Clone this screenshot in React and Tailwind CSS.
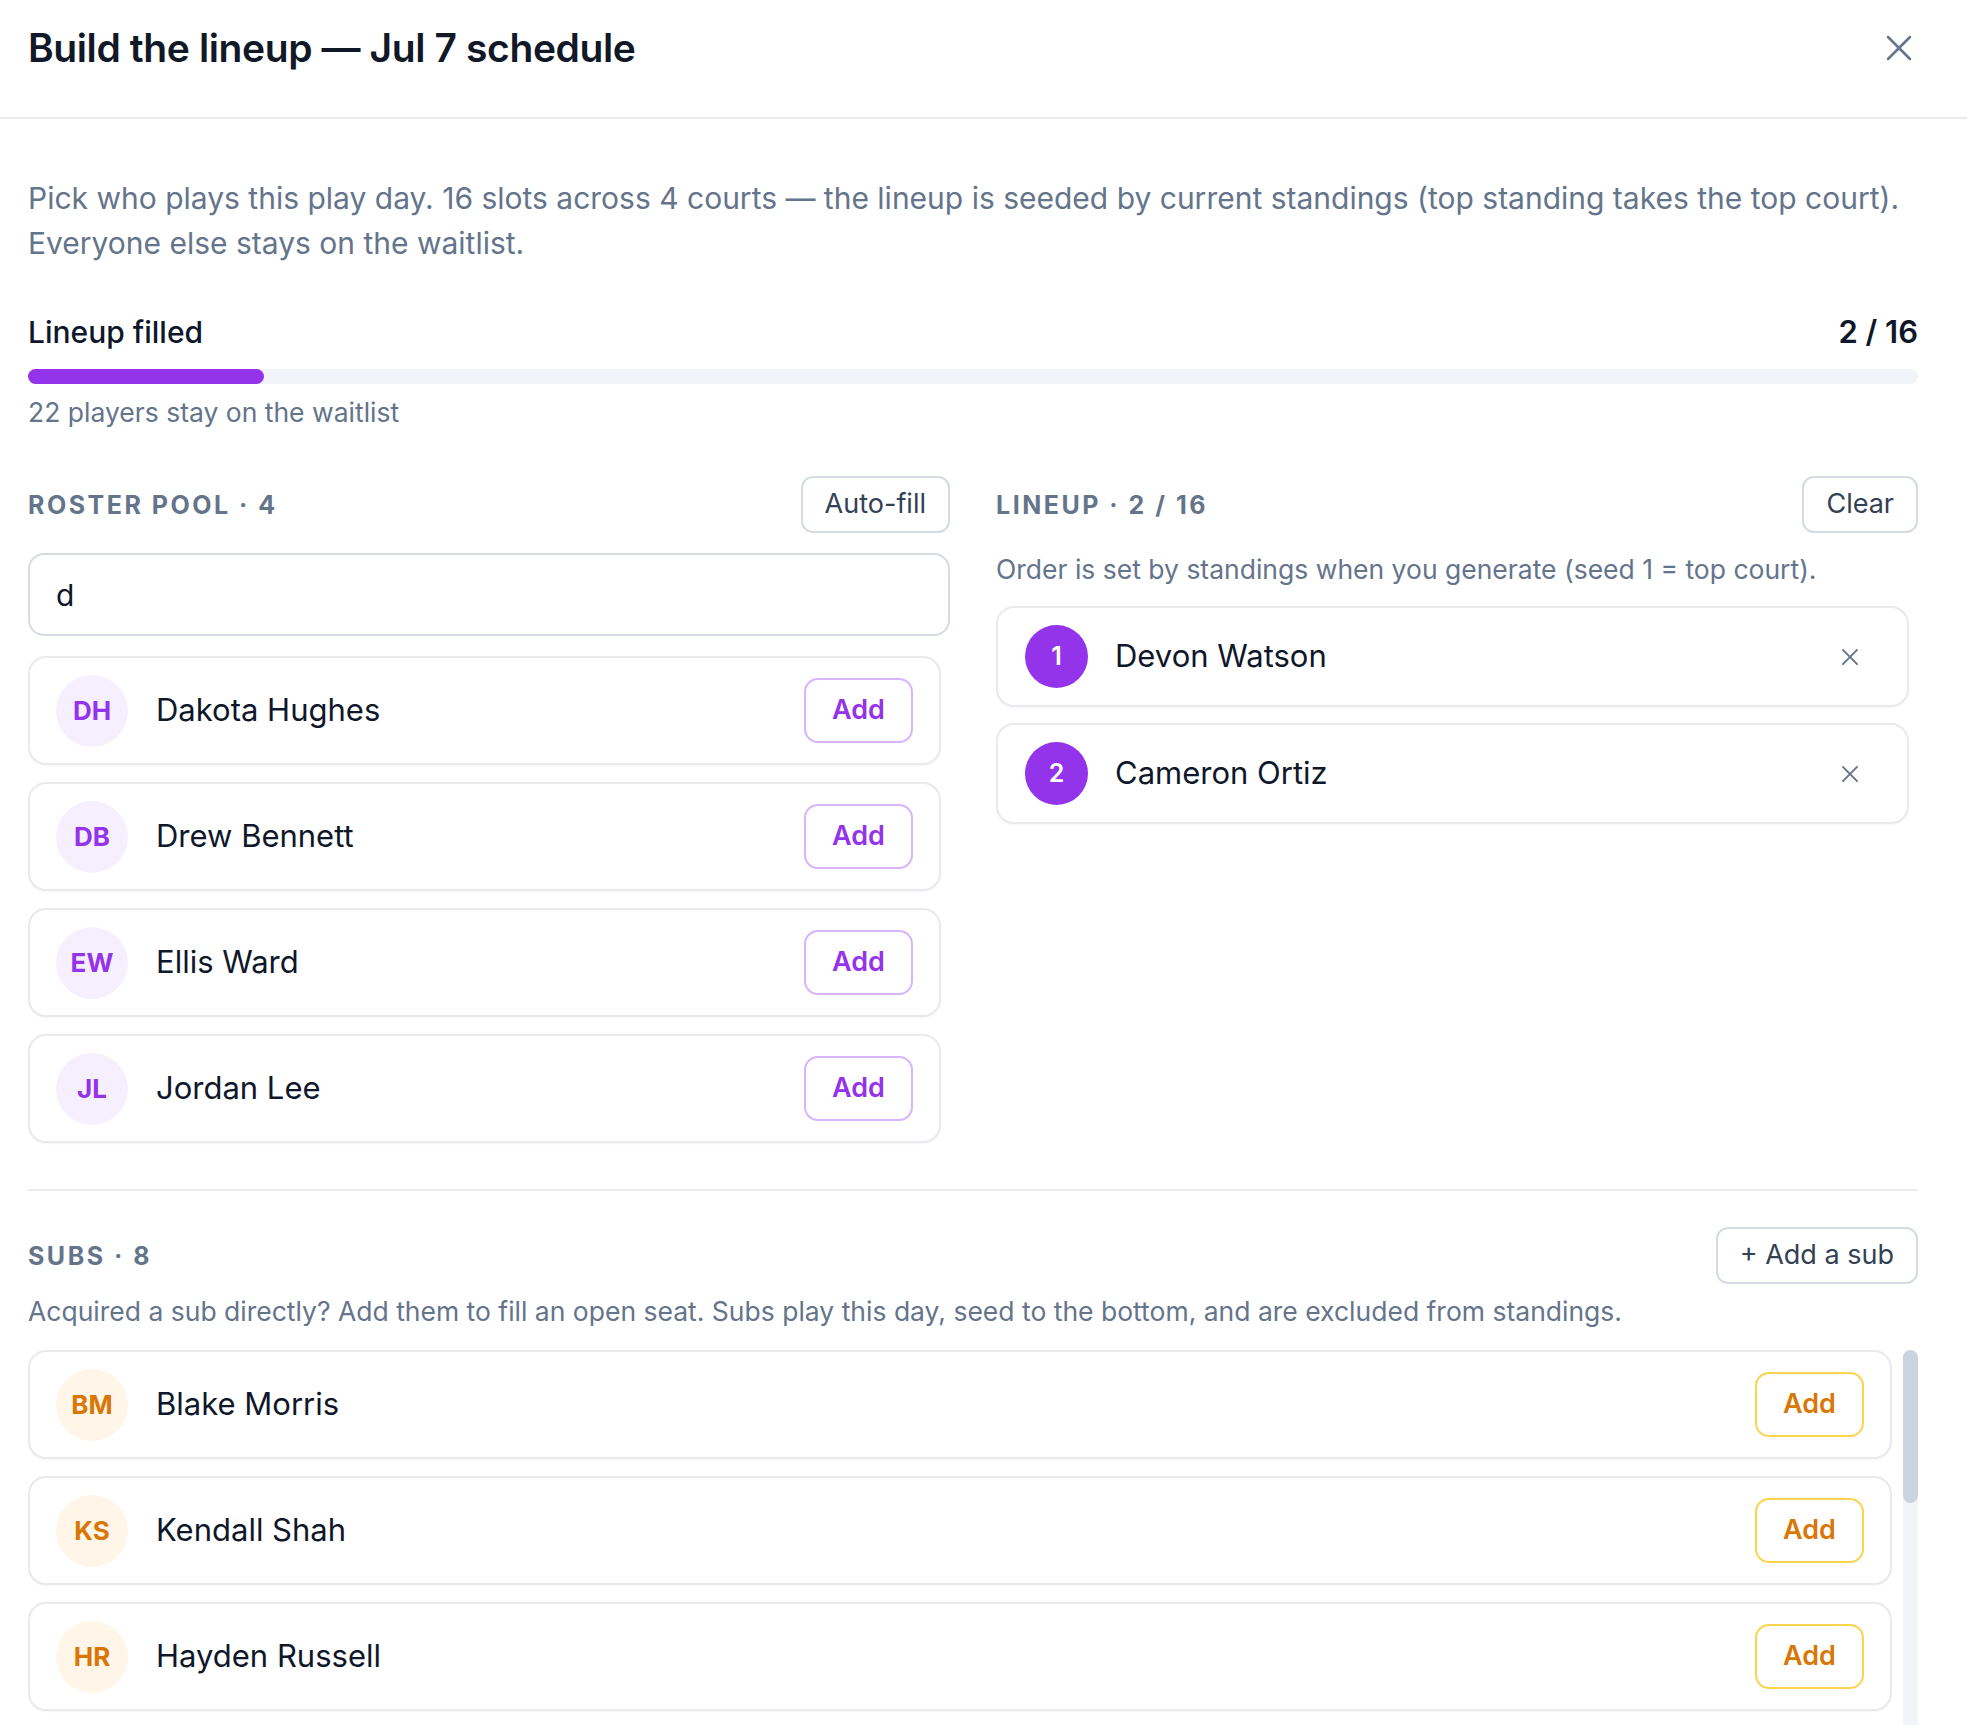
import React from "react";

const roster = [
  { initials: "DH", name: "Dakota Hughes" },
  { initials: "DB", name: "Drew Bennett" },
  { initials: "EW", name: "Ellis Ward" },
  { initials: "JL", name: "Jordan Lee" },
];

const lineup = [
  { seed: 1, name: "Devon Watson" },
  { seed: 2, name: "Cameron Ortiz" },
];

const subs = [
  { initials: "BM", name: "Blake Morris" },
  { initials: "KS", name: "Kendall Shah" },
  { initials: "HR", name: "Hayden Russell" },
  { initials: "QF", name: "Quinn Foster" },
  { initials: "RB", name: "Riley Brooks" },
  { initials: "SH", name: "Sawyer Hayes" },
  { initials: "PR", name: "Parker Reed" },
  { initials: "SG", name: "Skyler Grant" },
];

function CloseIcon({ size = 28, stroke = 2.5 }) {
  return (
    <svg width={size} height={size} viewBox="0 0 28 28" fill="none">
      <path
        d="M3 3 25 25M25 3 3 25"
        stroke="currentColor"
        strokeWidth={stroke}
        strokeLinecap="round"
      />
    </svg>
  );
}

function SectionLabel({ children }) {
  return (
    <h2 className="pt-[3px] text-[25px] font-bold tracking-[0.1em] text-[#64748b] uppercase">
      {children}
    </h2>
  );
}

function GhostButton({ children }) {
  return (
    <button className="h-[57px] px-[22px] border-2 border-[#d6dbe3] rounded-[12px] text-[27px] text-[#334155] bg-white">
      {children}
    </button>
  );
}

function PlayerCard({ initials, name, tone }) {
  const sub = tone === "sub";
  return (
    <div className="h-[109px] shrink-0 flex items-center px-[26px] border-2 border-[#e8eaee] rounded-[18px] bg-white shadow-[0_1px_2px_rgba(15,23,42,0.04)]">
      <div
        className={`w-[72px] h-[72px] rounded-full flex items-center justify-center text-[26px] font-bold ${
          sub ? "bg-[#fff5e8] text-[#d97706]" : "bg-[#f6effe] text-[#9333ea]"
        }`}
      >
        {initials}
      </div>
      <span className="ml-[28px] text-[31px] text-[#0f172a]">{name}</span>
      <button
        className={`ml-auto w-[109px] h-[65px] border-2 rounded-[14px] text-[27px] font-semibold bg-white ${
          sub ? "border-[#fcd34d] text-[#d97706]" : "border-[#d8b4fe] text-[#9333ea]"
        }`}
      >
        Add
      </button>
    </div>
  );
}

export default function App() {
  return (
    <div className="w-full h-screen overflow-hidden bg-white font-['Inter',sans-serif] text-[#0f172a]">
      {/* header */}
      <div className="h-[119px] border-b-2 border-[#e8eaee] flex items-start justify-between pl-[28px] pr-[54px] pt-[28px]">
        <h1 className="h-[40px] flex items-center text-[39px] font-semibold tracking-[-0.01em] text-[#111827]">
          Build the lineup — Jul 7 schedule
        </h1>
        <button className="h-[40px] flex items-center text-[#64748b]">
          <CloseIcon />
        </button>
      </div>

      <div className="pl-[28px] pr-[49px] pt-[57px]">
        <p className="text-[30px] leading-[45px] text-[#64748b]">
          Pick who plays this play day. 16 slots across 4 courts — the lineup is seeded by current
          standings (top standing takes the top court). Everyone else stays on the waitlist.
        </p>

        <div className="mt-[46px] h-[40px] flex items-center justify-between">
          <span className="text-[30px] font-medium">Lineup filled</span>
          <span className="text-[31px] font-semibold">2 / 16</span>
        </div>
        <div className="mt-[17px] h-[15px] rounded-full bg-[#f1f4f8]">
          <div className="h-full w-[12.5%] rounded-full bg-[#9333ea]"></div>
        </div>
        <p className="mt-[10px] text-[26.5px] leading-[36px] text-[#64748b]">
          22 players stay on the waitlist
        </p>

        <div className="mt-[46px] grid grid-cols-2 gap-x-[46px]">
          {/* roster pool */}
          <div>
            <div className="h-[57px] flex items-center justify-between">
              <SectionLabel>Roster pool · 4</SectionLabel>
              <GhostButton>Auto-fill</GhostButton>
            </div>
            <input
              type="text"
              defaultValue="d"
              className="mt-[20px] h-[83px] w-full border-2 border-[#d6dbe3] rounded-[16px] px-[26px] text-[30px] text-[#0f172a] outline-none"
            />
            <div className="mt-[20px] flex flex-col gap-[17px] pr-[9px]">
              {roster.map((p) => (
                <PlayerCard key={p.initials} {...p} />
              ))}
            </div>
          </div>

          {/* lineup */}
          <div>
            <div className="h-[57px] flex items-center justify-between">
              <SectionLabel>Lineup · 2 / 16</SectionLabel>
              <GhostButton>Clear</GhostButton>
            </div>
            <p className="mt-[18px] text-[26.5px] leading-[36px] text-[#64748b]">
              Order is set by standings when you generate (seed 1 = top court).
            </p>
            <div className="mt-[19px] flex flex-col gap-[16px] pr-[9px]">
              {lineup.map((p) => (
                <div
                  key={p.seed}
                  className="h-[101px] flex items-center px-[27px] border-2 border-[#e8eaee] rounded-[18px] bg-white shadow-[0_1px_2px_rgba(15,23,42,0.04)]"
                >
                  <div className="w-[63px] h-[63px] rounded-full bg-[#9333ea] text-white flex items-center justify-center text-[25px] font-semibold">
                    {p.seed}
                  </div>
                  <span className="ml-[27px] text-[31px]">{p.name}</span>
                  <button className="ml-auto mr-[21px] w-[18px] h-[18px] flex items-center justify-center text-[#64748b]">
                    <CloseIcon size={18} stroke={3} />
                  </button>
                </div>
              ))}
            </div>
          </div>
        </div>

        <div className="mt-[46px] border-t-2 border-[#e8eaee]"></div>

        {/* subs */}
        <div className="mt-[36px] h-[56px] flex items-center justify-between">
          <SectionLabel>Subs · 8</SectionLabel>
          <GhostButton>+ Add a sub</GhostButton>
        </div>
        <p className="mt-[10px] text-[26.5px] leading-[36px] text-[#64748b]">
          Acquired a sub directly? Add them to fill an open seat. Subs play this day, seed to the
          bottom, and are excluded from standings.
        </p>
        <div className="mt-[21px] h-[388px] flex gap-[11px]">
          <div className="flex-1 overflow-hidden flex flex-col gap-[17px]">
            {subs.map((p) => (
              <PlayerCard key={p.initials} {...p} tone="sub" />
            ))}
          </div>
          <div className="w-[15px] h-full rounded-full bg-[#f1f4f8]">
            <div className="h-[153px] rounded-full bg-[#cbd3de]"></div>
          </div>
        </div>
      </div>
    </div>
  );
}
